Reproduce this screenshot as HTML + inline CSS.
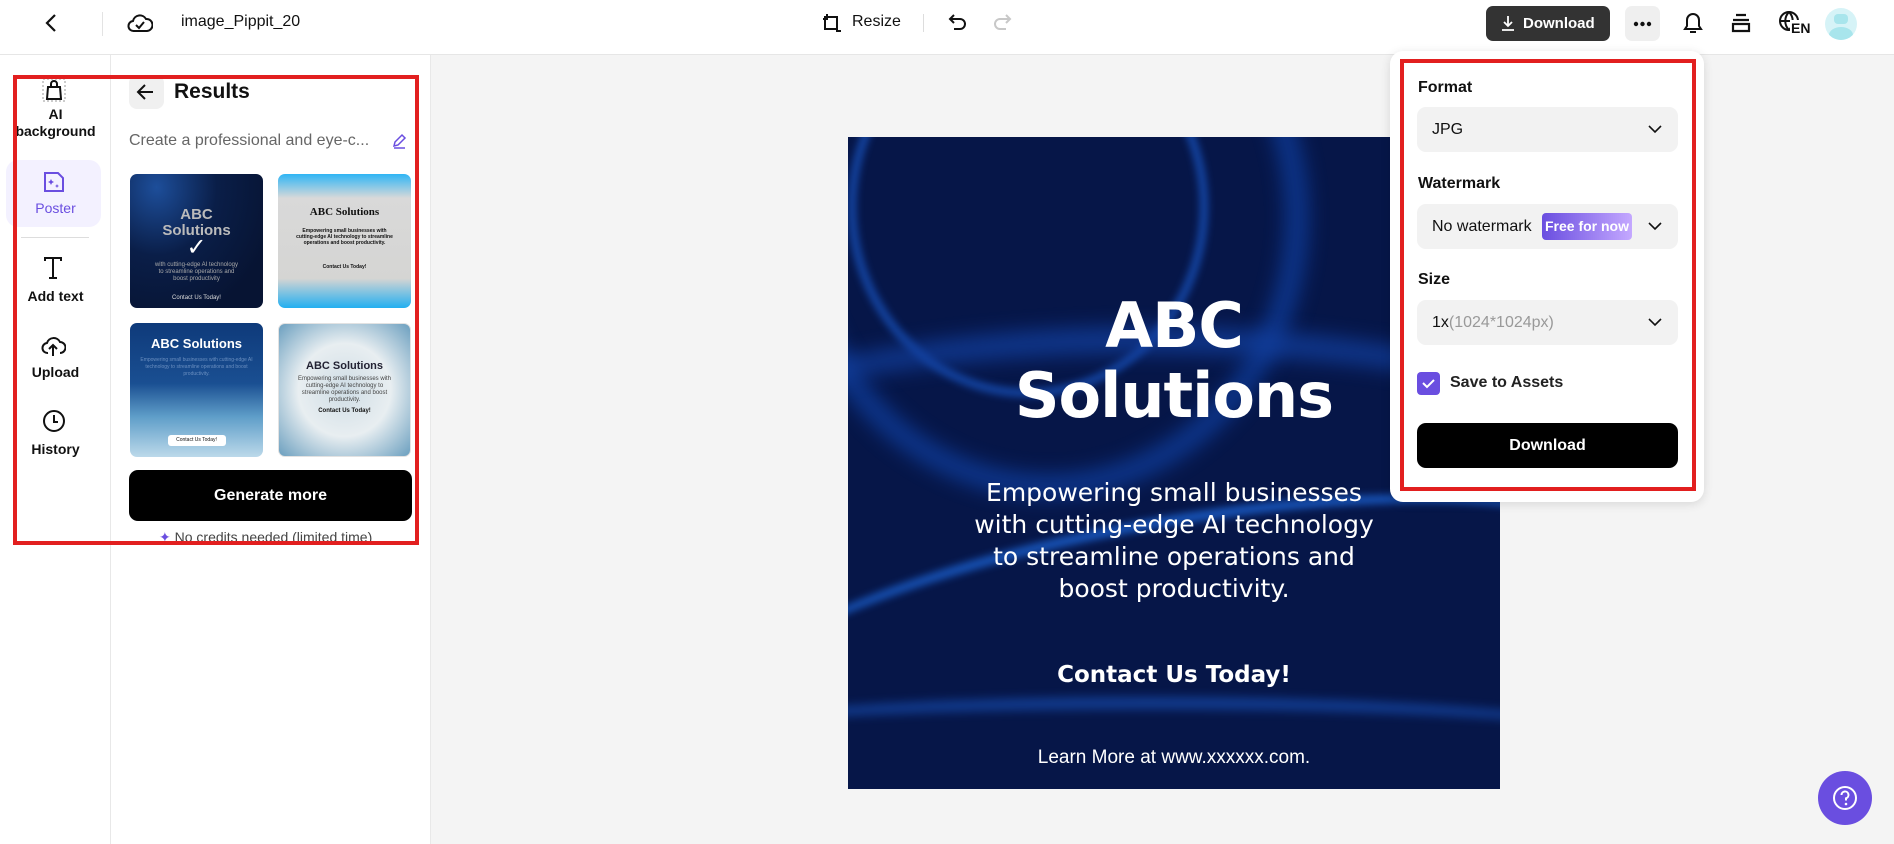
<!DOCTYPE html>
<html style="overflow:hidden;height:844px"><head><meta charset="utf-8"><style>
*{box-sizing:border-box;margin:0;padding:0}
body{width:1894px;height:844px;overflow:hidden;background:#f4f4f4;font-family:"Liberation Sans",sans-serif;position:relative;color:#111}
.abs{position:absolute}
.hdr{left:0;top:0;width:1894px;height:55px;background:#fff;border-bottom:1px solid #e6e6e6}
.rail{left:0;top:55px;width:111px;height:789px;background:#fff;border-right:1px solid #e8e8e8}
.panel{left:111px;top:55px;width:320px;height:789px;background:#fff;border-right:1px solid #e8e8e8}
.lbl{font-size:14px;font-weight:bold;text-align:center;width:111px;left:0;line-height:17px}
.thumb{border-radius:7px;overflow:hidden;width:133px;height:134px}
.sel{left:1417px;width:261px;height:45px;background:#f2f2f2;border-radius:9px;font-size:16px;padding-left:15px;line-height:45px}
.chev{right:16px;top:16px}
.flab{left:1418px;font-size:16px;font-weight:bold}
</style></head><body>
<div class="abs hdr"></div>
<svg class="abs" style="left:44px;top:13px" width="16" height="20" viewBox="0 0 16 20"><path d="M11 2 L3 10 L11 18" fill="none" stroke="#111" stroke-width="2.2"/></svg>
<div class="abs" style="left:102px;top:12px;width:1px;height:24px;background:#e3e3e3"></div>
<svg class="abs" style="left:127px;top:11px" width="26" height="24" viewBox="0 0 26 24"><path d="M7 20 a5 5 0 0 1 -1-10 a7 7 0 0 1 13-2 a6 6 0 0 1 1 12 z" fill="none" stroke="#111" stroke-width="2"/><path d="M9 14 l3 3 l5-6" fill="none" stroke="#111" stroke-width="2"/></svg>
<div class="abs" style="left:181px;top:13px;font-size:16px">image_Pippit_20</div>
<svg class="abs" style="left:821px;top:12px" width="22" height="22" viewBox="0 0 22 22"><path d="M4 5 h12 v12 h-12 z" fill="none" stroke="#111" stroke-width="2"/><path d="M6 2v6M16 14v6M2 7h4M16 19h4" stroke="#111" stroke-width="2"/></svg>
<div class="abs" style="left:852px;top:13px;font-size:16px">Resize</div>
<div class="abs" style="left:923px;top:14px;width:1px;height:18px;background:#ddd"></div>
<svg class="abs" style="left:948px;top:12px" width="20" height="20" viewBox="0 0 20 20"><path d="M6 3 L2 7 L6 11 M2 7 H12 a5 5 0 0 1 0 10 H6" fill="none" stroke="#111" stroke-width="2"/></svg>
<svg class="abs" style="left:992px;top:12px" width="20" height="20" viewBox="0 0 20 20"><path d="M14 3 L18 7 L14 11 M18 7 H8 a5 5 0 0 0 0 10 H14" fill="none" stroke="#c8c8c8" stroke-width="2"/></svg>
<div class="abs" style="left:1486px;top:6px;width:124px;height:35px;background:#333;border-radius:7px;color:#fff;font-weight:bold;font-size:15px;line-height:35px;padding-left:37px">Download</div>
<svg class="abs" style="left:1500px;top:14px" width="16" height="18" viewBox="0 0 16 18"><path d="M8 2v10M4 8l4 4 4-4M2 16h12" fill="none" stroke="#fff" stroke-width="1.8"/></svg>
<div class="abs" style="left:1625px;top:6px;width:35px;height:35px;background:#efefef;border-radius:7px"><svg width="35" height="35" viewBox="0 0 35 35"><circle cx="11" cy="18" r="2.2" fill="#111"/><circle cx="17.5" cy="18" r="2.2" fill="#111"/><circle cx="24" cy="18" r="2.2" fill="#111"/></svg></div>
<svg class="abs" style="left:1681px;top:10px" width="24" height="26" viewBox="0 0 24 26"><path d="M4 19 h16 l-2-3 v-6 a6 6 0 0 0 -12 0 v6 z M9 22 h6" fill="none" stroke="#111" stroke-width="2"/></svg>
<svg class="abs" style="left:1730px;top:12px" width="22" height="22" viewBox="0 0 22 22"><path d="M6 3h10M3 8h16M3 12h16v7h-16z" fill="none" stroke="#111" stroke-width="2.2"/></svg>
<svg class="abs" style="left:1778px;top:10px" width="24" height="24" viewBox="0 0 24 24"><circle cx="11" cy="11" r="9" fill="none" stroke="#111" stroke-width="2"/><path d="M2 11h18M11 2c-5 5-5 13 0 18M11 2c5 5 5 13 0 18" fill="none" stroke="#111" stroke-width="2"/></svg>
<div class="abs" style="left:1790px;top:20px;font-weight:bold;font-size:14px;background:#fff;padding:0 1px">EN</div>
<div class="abs" style="left:1825px;top:8px;width:32px;height:32px;border-radius:50%;background:#d6f3f7;overflow:hidden"><div class="abs" style="left:9px;top:6px;width:14px;height:10px;background:#a8e5ec;border-radius:4px"></div><div class="abs" style="left:4px;top:19px;width:24px;height:16px;background:#a8e5ec;border-radius:50%"></div></div>

<div class="abs rail"></div>
<div class="abs panel"></div>
<svg class="abs" style="left:42px;top:78px" width="24" height="24" viewBox="0 0 24 24"><rect x="1" y="1" width="22" height="22" fill="none" stroke="#999" stroke-dasharray="2 2"/><path d="M5 21 L6 9 h12 l1 12z M9 9 v-3 a3 3 0 0 1 6 0 v3" fill="none" stroke="#111" stroke-width="2"/></svg>
<div class="abs lbl" style="top:106px">AI<br>background</div>
<div class="abs" style="left:6px;top:160px;width:95px;height:67px;background:#f3f1ff;border-radius:12px"></div>
<svg class="abs" style="left:42px;top:170px" width="24" height="24" viewBox="0 0 24 24"><path d="M3 3h13l5 5v13h-18z" fill="none" stroke="#6a4ee0" stroke-width="2"/><path d="M9 9l1 2 2 1-2 1-1 2-1-2-2-1 2-1z M15 14l.6 1.4 1.4.6-1.4.6-.6 1.4-.6-1.4-1.4-.6 1.4-.6z" fill="#6a4ee0"/></svg>
<div class="abs lbl" style="top:200px;color:#6a4ee0;font-weight:normal">Poster</div>
<div class="abs" style="left:21px;top:237px;width:68px;height:1px;background:#ddd"></div>
<svg class="abs" style="left:42px;top:256px" width="22" height="24" viewBox="0 0 22 24"><path d="M3 5V2h16v3M11 2v20M7 22h8" fill="none" stroke="#111" stroke-width="2"/></svg>
<div class="abs lbl" style="top:288px">Add text</div>
<svg class="abs" style="left:40px;top:333px" width="26" height="26" viewBox="0 0 26 26"><path d="M8 20 a5 5 0 0 1 -1-10 a7 7 0 0 1 13-1 a5.5 5.5 0 0 1 0 11M13 23v-10M9 16l4-4 4 4" fill="none" stroke="#111" stroke-width="2"/></svg>
<div class="abs lbl" style="top:364px">Upload</div>
<svg class="abs" style="left:42px;top:409px" width="24" height="24" viewBox="0 0 24 24"><circle cx="12" cy="12" r="10" fill="none" stroke="#111" stroke-width="2"/><path d="M12 6v7h4" fill="none" stroke="#111" stroke-width="2"/></svg>
<div class="abs lbl" style="top:441px">History</div>
<div class="abs" style="left:129px;top:75px;width:35px;height:34px;background:#f0f0f0;border-radius:8px"></div>
<svg class="abs" style="left:136px;top:82px" width="20" height="20" viewBox="0 0 20 20"><path d="M17 10H3M9 3l-7 7 7 7" fill="none" stroke="#111" stroke-width="2"/></svg>
<div class="abs" style="left:174px;top:80px;font-size:21px;font-weight:bold">Results</div>
<div class="abs" style="left:129px;top:132px;font-size:16px;color:#666">Create a professional and eye-c...</div>
<svg class="abs" style="left:391px;top:133px" width="16" height="16" viewBox="0 0 16 16"><path d="M3 13l1-4 7-7 3 3-7 7zM3 15h11" fill="none" stroke="#6a4ee0" stroke-width="1.5"/></svg>
<div class="abs thumb" style="left:130px;top:174px;background:radial-gradient(ellipse at 20% 10%,#1d4e9a 0,#0a1e48 40%,#071433 80%)"><div style="color:#bbb;font-weight:bold;font-size:15px;text-align:center;margin-top:33px;line-height:16px">ABC<br>Solutions</div><div style="color:#fff;font-size:24px;text-align:center;margin-top:-6px">✓</div><div style="color:#aaa;font-size:6px;text-align:center;line-height:7px">with cutting-edge AI technology<br>to streamline operations and<br>boost productivity</div><div style="color:#ddd;font-size:6px;text-align:center;margin-top:12px">Contact Us Today!</div></div>
<div class="abs thumb" style="left:278px;top:174px;background:linear-gradient(180deg,#2fb5f5 0,#d9d9d9 18%,#d5d5d3 78%,#22aff0 100%)"><div style="font-family:'Liberation Serif',serif;font-weight:bold;font-size:11px;text-align:center;margin-top:32px">ABC Solutions</div><div style="font-size:5px;text-align:center;margin:10px 18px;line-height:6px;font-weight:bold">Empowering small businesses with cutting-edge AI technology to streamline operations and boost productivity.</div><div style="font-size:5px;text-align:center;margin-top:18px;font-weight:bold">Contact Us Today!</div></div>
<div class="abs thumb" style="left:130px;top:323px;background:linear-gradient(180deg,#0e3a7a 0,#1a4f92 45%,#5f9ec9 70%,#bcd9ea 100%)"><div style="color:#fff;font-weight:bold;font-size:13px;text-align:center;margin-top:13px">ABC Solutions</div><div style="color:#6a8fc0;font-size:5px;text-align:center;margin:6px 10px;line-height:7px">Empowering small businesses with cutting-edge AI technology to streamline operations and boost productivity.</div><div style="width:58px;height:11px;background:#fff;border-radius:3px;margin:57px auto 0;font-size:5px;text-align:center;line-height:11px">Contact Us Today!</div></div>
<div class="abs thumb" style="left:278px;top:323px;background:radial-gradient(ellipse at 50% 50%,#cfdde5 0,#e8eef1 50%,#6b9fbf 100%);border:1px solid #e2e2e2"><div style="color:#223;font-weight:bold;font-size:11px;text-align:center;margin-top:36px">ABC Solutions</div><div style="color:#444;font-size:6px;text-align:center;margin:4px 16px;line-height:7px">Empowering small businesses with cutting-edge AI technology to streamline operations and boost productivity.</div><div style="font-size:6px;text-align:center;font-weight:bold;margin-top:4px">Contact Us Today!</div></div>
<div class="abs" style="left:129px;top:470px;width:283px;height:51px;background:#000;border-radius:9px;color:#fff;font-weight:bold;font-size:16px;text-align:center;line-height:51px">Generate more</div>
<div class="abs" style="left:159px;top:529px;font-size:14px;color:#444"><span style="color:#6a4ee0">✦</span> No credits needed (limited time)</div>
<div class="abs" style="left:13px;top:75px;width:406px;height:470px;border:4px solid #e21f1f"></div>

<div class="abs" style="left:848px;top:137px;width:652px;height:652px;overflow:hidden;background:#061648;">
<div class="abs" style="left:-60px;top:-200px;width:520px;height:560px;border-radius:50%;border:22px solid #0f3fa0;filter:blur(10px);opacity:.8"></div>
<div class="abs" style="left:0px;top:-120px;width:360px;height:380px;border-radius:50%;border:8px solid #1b5cd0;filter:blur(4px);opacity:.7"></div>
<div class="abs" style="left:-200px;top:190px;width:1000px;height:300px;border-radius:50%;border-top:26px solid #123f9e;filter:blur(10px);opacity:.8"></div>
<div class="abs" style="left:-150px;top:380px;width:950px;height:260px;border-radius:50%;border-top:10px solid #1e6ae0;filter:blur(4px);opacity:.75;transform:rotate(-10deg)"></div>
<div class="abs" style="left:-200px;top:560px;width:1000px;height:90px;border-radius:50%;border-top:12px solid #1e62d8;filter:blur(5px);opacity:.5"></div>
<div style="position:relative;color:#fff;text-align:center;font-family:'DejaVu Sans',sans-serif;font-weight:bold;font-size:62px;line-height:70px;margin-top:154px;letter-spacing:-1px">ABC<br>Solutions</div>
<div style="position:relative;color:#fff;text-align:center;font-family:'DejaVu Sans',sans-serif;font-size:25px;line-height:32px;margin-top:46px">Empowering small businesses<br>with cutting-edge AI technology<br>to streamline operations and<br>boost productivity.</div>
<div style="position:relative;color:#fff;text-align:center;font-family:'DejaVu Sans',sans-serif;font-size:23px;font-weight:bold;margin-top:57px">Contact Us Today!</div>
<div style="position:relative;color:#fff;text-align:center;font-size:19px;margin-top:59px">Learn More at www.xxxxxx.com.</div>
</div>

<div class="abs" style="left:1390px;top:51px;width:314px;height:451px;background:#fff;border-radius:13px;box-shadow:0 2px 10px rgba(0,0,0,.12)"></div>
<div class="abs flab" style="top:79px">Format</div>
<div class="abs sel" style="top:107px">JPG<svg class="abs chev" width="14" height="12" viewBox="0 0 14 12"><path d="M1 3l6 6 6-6" fill="none" stroke="#111" stroke-width="1.6"/></svg></div>
<div class="abs flab" style="top:175px">Watermark</div>
<div class="abs sel" style="top:204px">No watermark<span class="abs" style="left:125px;top:9px;width:90px;height:27px;border-radius:4px;background:linear-gradient(90deg,#6a4ee0,#c4a8ff);color:#fff;font-weight:bold;font-size:14px;line-height:27px;text-align:center">Free for now</span><svg class="abs chev" width="14" height="12" viewBox="0 0 14 12"><path d="M1 3l6 6 6-6" fill="none" stroke="#111" stroke-width="1.6"/></svg></div>
<div class="abs flab" style="top:271px">Size</div>
<div class="abs sel" style="top:300px">1x<span style="color:#999">(1024*1024px)</span><svg class="abs chev" width="14" height="12" viewBox="0 0 14 12"><path d="M1 3l6 6 6-6" fill="none" stroke="#111" stroke-width="1.6"/></svg></div>
<div class="abs" style="left:1417px;top:372px;width:23px;height:23px;background:#6a4ee0;border-radius:4px"><svg width="23" height="23" viewBox="0 0 23 23"><path d="M6 11l4 4 7-7" fill="none" stroke="#fff" stroke-width="2"/></svg></div>
<div class="abs" style="left:1450px;top:374px;font-size:16px;font-weight:bold;color:#222">Save to Assets</div>
<div class="abs" style="left:1417px;top:423px;width:261px;height:45px;background:#000;border-radius:9px;color:#fff;font-weight:bold;font-size:16px;text-align:center;line-height:45px">Download</div>
<div class="abs" style="left:1400px;top:59px;width:296px;height:432px;border:4px solid #e21f1f"></div>

<div class="abs" style="left:1818px;top:771px;width:54px;height:54px;border-radius:50%;background:#6a4ee0"><svg width="54" height="54" viewBox="0 0 54 54"><circle cx="27" cy="27" r="11" fill="none" stroke="#fff" stroke-width="2"/><path d="M23.5 24a3.5 3.5 0 1 1 4.5 3.3v2.2" fill="none" stroke="#fff" stroke-width="2"/><circle cx="28" cy="33" r="1.3" fill="#fff"/></svg></div>
</body></html>
